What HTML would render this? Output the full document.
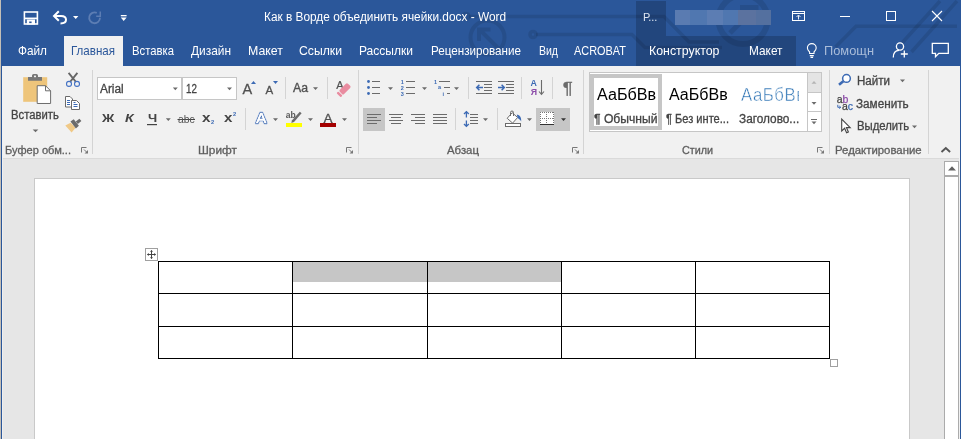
<!DOCTYPE html>
<html lang="ru">
<head>
<meta charset="utf-8">
<title>Как в Ворде объединить ячейки.docx - Word</title>
<style>
html,body{margin:0;padding:0}
body{width:961px;height:439px;position:relative;overflow:hidden;background:#e6e6e6;font-family:"Liberation Sans",sans-serif}
.a{position:absolute}
.t{position:absolute;white-space:nowrap;line-height:1;transform-origin:0 0}
.sep{position:absolute;width:1px;background:#d4d4d4}
svg{position:absolute;overflow:visible}
</style>
</head>
<body>
<!-- title bar + tab row -->
<div class="a" style="left:0;top:0;width:961px;height:66px;background:#2b579a"></div>
<!-- contextual tab (table tools) -->
<div class="a" style="left:636px;top:1px;width:30px;height:35px;background:#22467d"></div>
<div class="a" style="left:636px;top:36px;width:160px;height:30px;background:#22467d"></div>
<!-- decorative circuit pattern in title bar -->
<svg style="left:0;top:0" width="961" height="66" viewBox="0 0 961 66"><g fill="none" stroke="#000" stroke-opacity="0.10" stroke-width="3.600">
<circle cx="487.500" cy="37.500" r="17" stroke-width="4"/>
<path d="M498 48L480 30M479 41V29.500H490.500" stroke-width="4"/>
<circle cx="466" cy="16.500" r="3"/>
<path d="M469 16.500H664L689 42H719"/>
<circle cx="533" cy="34.500" r="3"/>
<path d="M536 34.500H632L645 47.500H722"/>
<circle cx="743" cy="19.500" r="24.500" stroke-width="6"/>
<path d="M730 33L754 9M740 7.500H756V23.500" stroke-width="5"/>
<path d="M957 26.300H856L835.500 47"/>
<path d="M940 1L902 43"/>
<path d="M957 1L911.500 52"/>
</g></svg>
<!-- blurred account name -->
<div class="a" style="left:675px;top:10px;width:96px;height:15px;background:linear-gradient(90deg,#5a7bb1 0 16%,#5077b0 16% 33%,#5c7db3 33% 50%,#5077b0 50% 66%,#5b729f 66% 84%,#54709f 84% 100%)"></div>
<!-- active tab -->
<div class="a" style="left:64px;top:36px;width:59px;height:30px;background:#f1f1f1"></div>
<!-- ribbon -->
<div class="a" style="left:2px;top:66px;width:957px;height:92px;background:#f1f1f1"></div>
<div class="a" style="left:2px;top:158px;width:957px;height:1px;background:#dadada"></div>
<!-- group separators -->
<div class="sep" style="left:92px;top:70px;height:84px"></div>
<div class="sep" style="left:358px;top:70px;height:84px"></div>
<div class="sep" style="left:583px;top:70px;height:84px"></div>
<div class="sep" style="left:829px;top:70px;height:84px"></div>
<div class="sep" style="left:928px;top:70px;height:84px"></div>
<!-- small separators -->
<div class="sep" style="left:285px;top:77px;height:22px"></div>
<div class="sep" style="left:327px;top:77px;height:22px"></div>
<div class="sep" style="left:245px;top:108px;height:22px"></div>
<div class="sep" style="left:468px;top:77px;height:22px"></div>
<div class="sep" style="left:521px;top:77px;height:22px"></div>
<div class="sep" style="left:552px;top:77px;height:22px"></div>
<div class="sep" style="left:455px;top:108px;height:22px"></div>
<div class="sep" style="left:497px;top:108px;height:22px"></div>
<!-- font name / size boxes -->
<div class="a" style="left:97px;top:77px;width:83px;height:21px;background:#fff;border:1px solid #c6c6c6"></div>
<div class="a" style="left:182px;top:77px;width:53px;height:21px;background:#fff;border:1px solid #c6c6c6"></div>
<!-- selected buttons -->
<div class="a" style="left:363px;top:108px;width:22px;height:23px;background:#c6c6c6"></div>
<div class="a" style="left:536px;top:108px;width:34px;height:23px;background:#c6c6c6"></div>
<!-- styles gallery -->
<div class="a" style="left:589px;top:72px;width:231px;height:58px;background:#fff;border:1px solid #c6c6c6"></div>
<div class="a" style="left:590px;top:74px;width:64px;height:48px;border:4px solid #c6c6c6"></div>
<div class="a" style="left:807px;top:72px;width:13px;height:20px;background:#e4e4e4;border:1px solid #c6c6c6"></div>
<div class="a" style="left:807px;top:92px;width:13px;height:19px;background:#fff;border:1px solid #c6c6c6"></div>
<div class="a" style="left:807px;top:111px;width:13px;height:19px;background:#fff;border:1px solid #c6c6c6"></div>
<!-- heading style preview (clipped) -->
<div class="a" style="left:738px;top:80px;width:61px;height:30px;overflow:hidden;will-change:transform"><span class="a" style="left:2.5px;top:5.5px;font-size:18.5px;line-height:1;color:#2e74b5;white-space:nowrap;letter-spacing:0.6px;font-weight:normal;-webkit-text-stroke:0.5px #fff;transform:scaleX(0.906);transform-origin:0 0">АаБбВв</span></div>

<!-- document area -->
<div class="a" style="left:0;top:0;width:1px;height:439px;background:#c4bfb7"></div>
<div class="a" style="left:1px;top:66px;width:1px;height:373px;background:#2b579a"></div>
<div class="a" style="left:2px;top:158px;width:1px;height:281px;background:#efefef"></div>
<div class="a" style="left:960px;top:66px;width:1px;height:373px;background:#2b579a"></div>
<div class="a" style="left:959px;top:66px;width:1px;height:373px;background:#f1f1f1"></div>
<!-- page -->
<div class="a" style="left:34px;top:178px;width:874px;height:270px;background:#fff;border:1px solid #c9c9c9"></div>
<!-- scrollbar -->
<div class="a" style="left:944px;top:161px;width:13px;height:290px;background:#fff;border:1px solid #ababab"></div>
<div class="a" style="left:944px;top:175px;width:15px;height:2px;background:#ababab"></div>
<svg style="left:948px;top:166px" width="8" height="5" viewBox="0 0 8 5"><path d="M0 4.5 L4 0.2 L8 4.5Z" fill="#606060"/></svg>

<!-- table -->
<div class="a" style="left:293px;top:262px;width:134px;height:20px;background:#c6c6c6"></div>
<div class="a" style="left:428px;top:262px;width:133px;height:20px;background:#c6c6c6"></div>
<svg style="left:0;top:0" width="961" height="439" shape-rendering="crispEdges">
<g fill="#000">
<rect x="158" y="261" width="672" height="1"/>
<rect x="158" y="293" width="672" height="1"/>
<rect x="158" y="326" width="672" height="1"/>
<rect x="158" y="358" width="672" height="1"/>
<rect x="158" y="261" width="1" height="98"/>
<rect x="292" y="261" width="1" height="98"/>
<rect x="427" y="261" width="1" height="98"/>
<rect x="561" y="261" width="1" height="98"/>
<rect x="695" y="261" width="1" height="98"/>
<rect x="829" y="261" width="1" height="98"/>
</g>
</svg>
<!-- table move handle -->
<div class="a" style="left:145px;top:248px;width:11px;height:11px;background:#fff;border:1px solid #a0a0a0"></div>
<svg style="left:147px;top:250px" width="9" height="9" viewBox="0 0 9 9"><path d="M4.5 0.5v8M0.5 4.5h8" stroke="#444" stroke-width="1" fill="none"/><path d="M4.5 0L6 1.8H3zM4.5 9L6 7.2H3zM0 4.5L1.8 3v3zM9 4.5L7.2 3v3z" fill="#444"/></svg>
<!-- table resize handle -->
<div class="a" style="left:830px;top:359px;width:6px;height:6px;background:#fff;border:1px solid #a0a0a0"></div>

<svg style="left:0;top:0" width="961" height="439" viewBox="0 0 961 439">
<!-- ===== title bar icons ===== -->
<g fill="none" stroke="#fff">
<rect x="24.4" y="12" width="13" height="12" stroke-width="1.6"/>
<path d="M25 18.4h12" stroke-width="1.7"/>
<path d="M26.8 19.5h8.2v5h-8.2z M29.2 21.5v2h2.4v-2z" fill="#fff" stroke="none" fill-rule="evenodd"/>
</g>
<g fill="none" stroke="#fff" stroke-width="2" stroke-linejoin="miter">
<path d="M58.8 11.2 L54 16 L58.8 20.8"/>
<path d="M54.5 16 H61 C64.5 16 66 18 66 19.8 C66 21.8 64 23.4 60.5 23.4"/>
</g>
<path d="M73 16h5.4l-2.7 3z" fill="#fff"/>
<g fill="none" stroke="#5c7db3" stroke-width="1.8">
<path d="M96.8 12.9 A5.4 5.4 0 1 0 100 17.8"/>
<path d="M96.2 16.2 H100.3 V11.6" stroke-width="1.5"/>
</g>
<g fill="#fff"><rect x="120.8" y="15" width="5.8" height="1.3"/><path d="M120.8 17.6h5.8l-2.9 3.3z"/></g>
<!-- window controls -->
<g fill="none" stroke="#fff" stroke-width="1">
<rect x="792.5" y="11.5" width="12" height="9"/>
<path d="M792.5 13.500h12" />
<path d="M798.500 19.500v-4M796.500 17l2 -2 2 2" stroke-width="0.900"/>
<path d="M840 16.500h10"/>
<rect x="886.5" y="11.500" width="9" height="9"/>
<path d="M932 11l10 10M942 11l-10 10" stroke-width="1.1"/>
</g>
<!-- tell me bulb -->
<g fill="none" stroke="#fff" stroke-width="1.1">
<path d="M809.6 53.5 V52 C808 50.6 807.4 49.6 807.4 48 A4.4 4.4 0 0 1 816.2 48 C816.2 49.6 815.6 50.6 814 52 V53.5 Z"/>
<path d="M809.8 55.6h4M810.5 57.4h2.6"/>
</g>
<!-- share person -->
<g fill="none" stroke="#fff" stroke-width="1.3">
<circle cx="900" cy="46.5" r="3.6"/>
<path d="M893.3 57.5 C893.3 52.5 896 50.3 899 50.3"/>
<path d="M904.3 50.5v7M900.8 54h7"/>
</g>
<!-- comment -->
<path d="M932.3 43.300h16v10h-9.500l-3.300 3.300v-3.300h-3.200z" fill="none" stroke="#fff" stroke-width="1.3"/>
</svg>

<svg style="left:0;top:0" width="961" height="439" viewBox="0 0 961 439">
<!-- ===== clipboard group ===== -->
<g>
<rect x="23.200" y="77.200" width="24" height="24.600" fill="#eec57b"/>
<path d="M28 80.800v-3.800h4v-1.400a1.600 1.600 0 0 1 1.600 -1.600h2.800a1.600 1.600 0 0 1 1.600 1.600v1.400h4v3.800z" fill="#777"/>
<rect x="34" y="75.600" width="2" height="1.600" fill="#f1f1f1"/>
<path d="M37.200 85.700h8.300l5.100 5.100v12.700h-13.400z" fill="#fff" stroke="#6e6e6e" stroke-width="1"/>
<path d="M45.500 85.700v5.100h5.100" fill="none" stroke="#6e6e6e" stroke-width="1"/>
</g>
<path d="M32.700 129.400h5.600l-2.800 2.800z" fill="#6b6b6b"/>
<g fill="none">
<path d="M68.600 72.800L76 82M77.400 72.800L70 82" stroke="#666" stroke-width="1.900"/>
<circle cx="69" cy="83.900" r="2.500" stroke="#4472c4" stroke-width="1.100"/>
<circle cx="77" cy="83.900" r="2.500" stroke="#4472c4" stroke-width="1.100"/>
</g>
<g stroke="#6b6b6b" stroke-width="1" fill="#fff">
<path d="M65.500 96.500h4.500l2.500 2.500v8h-7z"/>
<path d="M71.500 100.500h5l3 3v6h-8z"/>
<path d="M67 100.500h3M67 102.500h3M67 104.500h3M73.500 104.500h4M73.500 106.500h4M73.500 102.500h2" stroke="#3c6ab4" fill="none"/>
</g>
<g>
<path d="M65.300 125.600l5.300 -2.800 5 5 -4 4.600z" fill="#f0c987"/>
<path d="M70.500 121.500l3.200 -2.300 5.200 6.600 -3 2.600z" fill="#6b6b6b"/>
<path d="M75.800 121.600l3.600 -2.900 2 2.400 -3.600 2.900z" fill="#6b6b6b"/>
</g>
<!-- dialog launchers -->
<g fill="none" stroke="#777" stroke-width="1">
<path d="M81.500 152.500v-5h5M346.500 152.500v-5h5M572.500 152.500v-5h5M817.500 152.500v-5h5"/>
</g>
<g fill="#777">
<path d="M88 150v3.500h-3.500zM353 150v3.500h-3.500zM579 150v3.500h-3.500zM824 150v3.500h-3.500z"/>
<path d="M84 149.500l3 3M349 149.500l3 3M575 149.500l3 3M820 149.500l3 3" stroke="#777" stroke-width="1"/>
</g>
<!-- collapse ribbon chevron -->
<path d="M941.500 152l4.300 -4 4.300 4" fill="none" stroke="#555" stroke-width="1.900"/>
</svg>

<svg style="left:0;top:0;will-change:transform" width="961" height="439" viewBox="0 0 961 439" font-family="Liberation Sans, sans-serif">
<!-- ===== font group ===== -->
<g fill="#6b6b6b">
<path d="M172.800 87.500h5l-2.500 2.800zM227 87.500h5l-2.500 2.800z"/>
<path d="M165.800 118.200h5l-2.500 2.800zM273 118.200h5l-2.500 2.800zM308 118.200h5l-2.500 2.800zM342 118.200h5l-2.500 2.800zM313 87.200h5l-2.500 2.800z"/>
</g>
<rect x="147" y="124" width="10" height="1.200" fill="#444"/>
<rect x="177.500" y="119" width="17.500" height="1" fill="#444"/>
<text x="242.600" y="93.900" font-size="14.500" fill="#505050" stroke="#505050" stroke-width="0.300">A</text>
<path d="M251 83.900l2.500 -2.900 2.500 2.900z" fill="#3c6ab4"/>
<text x="265.600" y="93.900" font-size="11.500" fill="#505050" stroke="#505050" stroke-width="0.300">A</text>
<path d="M273 81h5l-2.500 2.900z" fill="#3c6ab4"/>
<!-- clear formatting -->
<text x="336.300" y="89" font-size="11" fill="#505050" stroke="#505050" stroke-width="0.200">A</text>
<g transform="translate(2 -2.300) rotate(-45 344.500 89.500)">
<rect x="336.500" y="86.600" width="11.500" height="6" rx="1.500" fill="#e98ca0"/>
<rect x="333.300" y="86.600" width="2.400" height="6" rx="0.800" fill="#e98ca0"/>
</g>
<!-- text effects -->
<text x="256.200" y="123.200" font-size="15" fill="#fff" stroke="#b4c7e7" stroke-width="3" stroke-linejoin="round" paint-order="stroke" textLength="10" lengthAdjust="spacingAndGlyphs">A</text>
<text x="256.200" y="123.200" font-size="15" fill="#fff" stroke="#3460a8" stroke-width="1.800" stroke-linejoin="round" paint-order="stroke" textLength="10" lengthAdjust="spacingAndGlyphs">A</text>
<text x="256.200" y="123.200" font-size="15" fill="#fff" stroke="#fff" stroke-width="0.500" textLength="10" lengthAdjust="spacingAndGlyphs">A</text>
<!-- highlight -->
<text x="285.800" y="117.800" font-size="8.500" font-weight="bold" fill="#595959">ab</text>
<path d="M299.800 111.800l1.800 1.500 -7.600 8.800 -2.700 1 0.600 -2.600z" fill="#6b6b6b"/>
<rect x="286" y="123" width="16" height="4" fill="#ffff00"/>
<!-- font color -->
<text x="323.400" y="122.700" font-size="13.600" fill="#505050" stroke="#505050" stroke-width="0.300">A</text>
<rect x="320" y="123" width="16" height="4" fill="#a40000"/>

<!-- ===== paragraph group ===== -->
<path d="M388 87.2h5l-2.500 2.800z" fill="#6b6b6b"/>
<path d="M422 87.2h5l-2.500 2.800z" fill="#6b6b6b"/>
<path d="M454 87.2h5l-2.500 2.800z" fill="#6b6b6b"/>
<path d="M483 118.2h5l-2.500 2.800z" fill="#6b6b6b"/>
<path d="M527 118.2h5l-2.500 2.800z" fill="#6b6b6b"/>
<path d="M561 118.2h5l-2.500 2.800z" fill="#333"/>
<circle cx="368.500" cy="81.5" r="1.400" fill="#3c6ab4"/>
<rect x="372" y="81" width="8" height="1" fill="#6b6b6b"/>
<rect x="406" y="81" width="9" height="1" fill="#6b6b6b"/>
<circle cx="368.500" cy="87.5" r="1.400" fill="#3c6ab4"/>
<rect x="372" y="87" width="8" height="1" fill="#6b6b6b"/>
<rect x="406" y="87" width="9" height="1" fill="#6b6b6b"/>
<circle cx="368.500" cy="93.5" r="1.400" fill="#3c6ab4"/>
<rect x="372" y="93" width="8" height="1" fill="#6b6b6b"/>
<rect x="406" y="93" width="9" height="1" fill="#6b6b6b"/>
<text x="400.700" y="83.5" font-size="5.500" font-weight="bold" fill="#3c6ab4">1</text>
<text x="400.700" y="89.5" font-size="5.500" font-weight="bold" fill="#3c6ab4">2</text>
<text x="400.700" y="95.5" font-size="5.500" font-weight="bold" fill="#3c6ab4">3</text>
<text x="434" y="83.500" font-size="5.500" font-weight="bold" fill="#3c6ab4">1</text>
<rect x="439" y="81" width="11" height="1" fill="#6b6b6b"/>
<text x="438" y="89.300" font-size="5.500" font-weight="bold" fill="#3c6ab4">a</text>
<rect x="444" y="87" width="6" height="1" fill="#6b6b6b"/>
<text x="442.500" y="95.500" font-size="5.500" font-weight="bold" fill="#3c6ab4">i</text>
<rect x="447" y="93" width="3" height="1" fill="#6b6b6b"/>
<rect x="476" y="81" width="16" height="1" fill="#6b6b6b"/>
<rect x="476" y="93" width="16" height="1" fill="#6b6b6b"/>
<rect x="484" y="84" width="8" height="1" fill="#6b6b6b"/>
<rect x="484" y="87" width="8" height="1" fill="#6b6b6b"/>
<rect x="484" y="90" width="8" height="1" fill="#6b6b6b"/>
<path d="M483 87.500h-6M479.4 84.800l-2.700 2.700 2.700 2.700" fill="none" stroke="#3c6ab4" stroke-width="1.500"/>
<rect x="498" y="81" width="16" height="1" fill="#6b6b6b"/>
<rect x="498" y="93" width="16" height="1" fill="#6b6b6b"/>
<rect x="506" y="84" width="8" height="1" fill="#6b6b6b"/>
<rect x="506" y="87" width="8" height="1" fill="#6b6b6b"/>
<rect x="506" y="90" width="8" height="1" fill="#6b6b6b"/>
<path d="M498 87.500h6M501.6 84.800l2.700 2.700 -2.700 2.700" fill="none" stroke="#3c6ab4" stroke-width="1.500"/>
<text x="530.600" y="86.200" font-size="8.800" font-weight="bold" fill="#3c6ab4">A</text>
<text x="530.800" y="94.700" font-size="8.800" font-weight="bold" fill="#8b4aa8">Я</text>
<path d="M541.500 80v14M539 91.500l2.500 2.800 2.500 -2.800" fill="none" stroke="#6b6b6b" stroke-width="1.100"/>
<text x="562.800" y="93.600" font-size="16" fill="#6b6b6b" stroke="#6b6b6b" stroke-width="0.300" textLength="10" lengthAdjust="spacingAndGlyphs">¶</text>
<rect x="367" y="114" width="14" height="1" fill="#6b6b6b"/>
<rect x="367" y="117" width="10" height="1" fill="#6b6b6b"/>
<rect x="367" y="120" width="14" height="1" fill="#6b6b6b"/>
<rect x="367" y="123" width="10" height="1" fill="#6b6b6b"/>
<rect x="389" y="114" width="14" height="1" fill="#6b6b6b"/>
<rect x="391" y="117" width="10" height="1" fill="#6b6b6b"/>
<rect x="389" y="120" width="14" height="1" fill="#6b6b6b"/>
<rect x="391" y="123" width="10" height="1" fill="#6b6b6b"/>
<rect x="411" y="114" width="14" height="1" fill="#6b6b6b"/>
<rect x="415" y="117" width="10" height="1" fill="#6b6b6b"/>
<rect x="411" y="120" width="14" height="1" fill="#6b6b6b"/>
<rect x="415" y="123" width="10" height="1" fill="#6b6b6b"/>
<rect x="433" y="114" width="14" height="1" fill="#6b6b6b"/>
<rect x="433" y="117" width="14" height="1" fill="#6b6b6b"/>
<rect x="433" y="120" width="14" height="1" fill="#6b6b6b"/>
<rect x="433" y="123" width="14" height="1" fill="#6b6b6b"/>
<path d="M466.400 111.800v5.800M464 114l2.400 -2.400 2.400 2.400M466.400 120.400v5.800M464 124l2.400 2.400 2.400 -2.400" fill="none" stroke="#3c6ab4" stroke-width="1.300"/>
<rect x="470" y="114" width="8" height="1" fill="#6b6b6b"/>
<rect x="470" y="117" width="8" height="1" fill="#6b6b6b"/>
<rect x="470" y="120" width="8" height="1" fill="#6b6b6b"/>
<rect x="470" y="123" width="8" height="1" fill="#6b6b6b"/>
<path d="M507.200 118.300l5 -5.600 5.400 4.800 -5 5.600z" fill="#fff" stroke="#6b6b6b" stroke-width="1"/>
<path d="M510.500 116v-3.500a1.500 1.500 0 0 1 3 0v3.500" fill="none" stroke="#6b6b6b" stroke-width="1"/>
<path d="M516.800 114.800c3 0 4.600 2.200 4.400 6.800 -1 -1.800 -2.200 -2.800 -3.400 -3.300z" fill="#3c6ab4"/>
<rect x="505.500" y="123.500" width="15" height="3" fill="#fff" stroke="#6b6b6b" stroke-width="1"/>
<rect x="540" y="112" width="14" height="12.500" fill="#fff"/>
<path d="M540 112.500h14M540 118.500h14M540.500 112v12M546.500 112v12M553.500 112v12" fill="none" stroke="#777" stroke-width="1" stroke-dasharray="1 1" shape-rendering="crispEdges"/>
<rect x="540" y="124" width="14" height="1" fill="#333"/>

<!-- ===== editing group ===== -->
<circle cx="846.500" cy="78.450" r="3.850" fill="#fff" stroke="#3c6ab4" stroke-width="1.500"/>
<path d="M843.300 81.300l-4.300 3.500" stroke="#3c6ab4" stroke-width="2.600" stroke-linecap="butt"/>
<text x="836.700" y="102.600" font-size="10.500" fill="#444" stroke="#444" stroke-width="0.250">a</text>
<text x="842.500" y="102.600" font-size="10.500" fill="#8b4aa8" stroke="#8b4aa8" stroke-width="0.250">b</text>
<text x="841.900" y="109.700" font-size="10.500" fill="#444" stroke="#444" stroke-width="0.250">a</text>
<text x="847.700" y="109.700" font-size="10.500" fill="#3c6ab4" stroke="#3c6ab4" stroke-width="0.250">c</text>
<path d="M837.800 104.800v2.500h2.800M839.300 106l1.500 1.300 -1.500 1.300" fill="none" stroke="#3c6ab4" stroke-width="1"/>
<path d="M841.700 119v12l2.900 -2.700 2 4.500 1.800 -0.800 -2 -4.400h3.800z" fill="#fff" stroke="#444" stroke-width="1.100" stroke-linejoin="miter"/>
<path d="M900 79.5h5l-2.500 2.800z" fill="#6b6b6b"/>
<path d="M912 125.5h5l-2.500 2.800z" fill="#6b6b6b"/>
<!-- gallery scroll buttons -->
<path d="M811.500 83.700l2.500 -2.800 2.500 2.800z" fill="#b5b5b5"/>
<path d="M811.5 102h5l-2.500 2.800z" fill="#6b6b6b"/>
<rect x="811" y="119" width="6" height="1" fill="#6b6b6b"/>
<path d="M811.5 121.500h5l-2.500 2.800z" fill="#6b6b6b"/>
</svg>

<div class="a" style="left:0;top:0;width:961px;height:439px;will-change:transform">
<span class="t" style="left:264px;top:10.72px;font-size:12.5px;color:#fff;transform:scaleX(0.9479)">Как в Ворде объединить ячейки.docx - Word</span>
<span class="t" style="left:643.4px;top:11.89px;font-size:11px;color:#dde5f1;transform:scaleX(0.9974)">Р...</span>
<span class="t" style="left:18px;top:43.50px;font-size:13px;color:#fff;transform:scaleX(0.9071)">Файл</span>
<span class="t" style="left:71px;top:43.50px;font-size:13px;color:#2b579a;transform:scaleX(0.8892)">Главная</span>
<span class="t" style="left:132px;top:43.50px;font-size:13px;color:#fff;transform:scaleX(0.8691)">Вставка</span>
<span class="t" style="left:191px;top:43.50px;font-size:13px;color:#fff;transform:scaleX(0.9153)">Дизайн</span>
<span class="t" style="left:248px;top:43.50px;font-size:13px;color:#fff;transform:scaleX(0.9512)">Макет</span>
<span class="t" style="left:299px;top:43.50px;font-size:13px;color:#fff;transform:scaleX(0.9392)">Ссылки</span>
<span class="t" style="left:359px;top:43.50px;font-size:13px;color:#fff;transform:scaleX(0.9253)">Рассылки</span>
<span class="t" style="left:431px;top:43.50px;font-size:13px;color:#fff;transform:scaleX(0.8965)">Рецензирование</span>
<span class="t" style="left:539px;top:43.50px;font-size:13px;color:#fff;transform:scaleX(0.8074)">Вид</span>
<span class="t" style="left:574px;top:43.50px;font-size:13px;color:#fff;transform:scaleX(0.8402)">ACROBAT</span>
<span class="t" style="left:649px;top:43.50px;font-size:13px;color:#fff;transform:scaleX(0.9511)">Конструктор</span>
<span class="t" style="left:748.5px;top:43.50px;font-size:13px;color:#fff;transform:scaleX(0.9104)">Макет</span>
<span class="t" style="left:824px;top:43.50px;font-size:13px;color:#a9bcd9;transform:scaleX(0.9877)">Помощн</span>
<span class="t" style="left:11.2px;top:109.34px;font-size:12px;color:#444444;-webkit-text-stroke:0.3px #444444;transform:scaleX(0.9396)">Вставить</span>
<span class="t" style="left:5px;top:144.99px;font-size:11px;color:#5e5e5e;-webkit-text-stroke:0.3px #5e5e5e;transform:scaleX(1.0060)">Буфер обм...</span>
<span class="t" style="left:198.3px;top:144.99px;font-size:11px;color:#5e5e5e;-webkit-text-stroke:0.3px #5e5e5e;transform:scaleX(1.0773)">Шрифт</span>
<span class="t" style="left:447.3px;top:144.99px;font-size:11px;color:#5e5e5e;-webkit-text-stroke:0.3px #5e5e5e;transform:scaleX(1.0370)">Абзац</span>
<span class="t" style="left:682.4px;top:144.99px;font-size:11px;color:#5e5e5e;-webkit-text-stroke:0.3px #5e5e5e;transform:scaleX(0.9810)">Стили</span>
<span class="t" style="left:835.4px;top:144.99px;font-size:11px;color:#5e5e5e;-webkit-text-stroke:0.3px #5e5e5e;transform:scaleX(1.0335)">Редактирование</span>
<span class="t" style="left:856.8px;top:74.64px;font-size:12px;color:#444444;-webkit-text-stroke:0.3px #444444;transform:scaleX(0.9635)">Найти</span>
<span class="t" style="left:856.3px;top:97.64px;font-size:12px;color:#444444;-webkit-text-stroke:0.3px #444444;transform:scaleX(0.9771)">Заменить</span>
<span class="t" style="left:856.8px;top:120.44px;font-size:12px;color:#444444;-webkit-text-stroke:0.3px #444444;transform:scaleX(0.9429)">Выделить</span>
<span class="t" style="left:100.3px;top:83.14px;font-size:12px;color:#444444;-webkit-text-stroke:0.3px #444444;transform:scaleX(0.9869)">Arial</span>
<span class="t" style="left:185.8px;top:83.14px;font-size:12px;color:#444444;-webkit-text-stroke:0.3px #444444;transform:scaleX(0.8159)">12</span>
<span class="t" style="left:101.7px;top:113.07px;font-size:11.5px;color:#444444;font-weight:bold;transform:scaleX(1.1820)">Ж</span>
<span class="t" style="left:125px;top:113.07px;font-size:11.5px;color:#444444;font-weight:bold;font-style:italic;transform:scaleX(1.2291)">К</span>
<span class="t" style="left:147.5px;top:113.07px;font-size:11.5px;color:#444444;font-weight:bold;transform:scaleX(1.1367)">Ч</span>
<span class="t" style="left:178px;top:113.99px;font-size:11px;color:#555555;transform:scaleX(0.9408)">abc</span>
<span class="t" style="left:202px;top:112.22px;font-size:12.5px;color:#444444;font-weight:bold;transform:scaleX(1.2225)">x</span>
<span class="t" style="left:211px;top:120.14px;font-size:5.5px;color:#3c6ab4;font-weight:bold;transform:scaleX(1.0449)">2</span>
<span class="t" style="left:223.8px;top:112.22px;font-size:12.5px;color:#444444;font-weight:bold;transform:scaleX(1.2081)">x</span>
<span class="t" style="left:233px;top:112.34px;font-size:5.5px;color:#3c6ab4;font-weight:bold;transform:scaleX(1.0449)">2</span>
<span class="t" style="left:596.7px;top:86.96px;font-size:16px;color:#000;transform:scaleX(1.0086)">АаБбВв</span>
<span class="t" style="left:668.8px;top:86.96px;font-size:16px;color:#000;transform:scaleX(1.0018)">АаБбВв</span>
<span class="t" style="left:594px;top:113.04px;font-size:12px;color:#444444;-webkit-text-stroke:0.3px #444444;transform:scaleX(1.0107)">¶ Обычный</span>
<span class="t" style="left:666px;top:113.04px;font-size:12px;color:#444444;-webkit-text-stroke:0.3px #444444;transform:scaleX(0.9227)">¶ Без инте...</span>
<span class="t" style="left:738.8px;top:113.04px;font-size:12px;color:#444444;-webkit-text-stroke:0.3px #444444;transform:scaleX(0.9841)">Заголово...</span>
<span class="t" style="left:293px;top:82.02px;font-size:12.5px;color:#505050;-webkit-text-stroke:0.35px #505050;transform:scaleX(0.9806)">Aa</span>
</div>
</body>
</html>
